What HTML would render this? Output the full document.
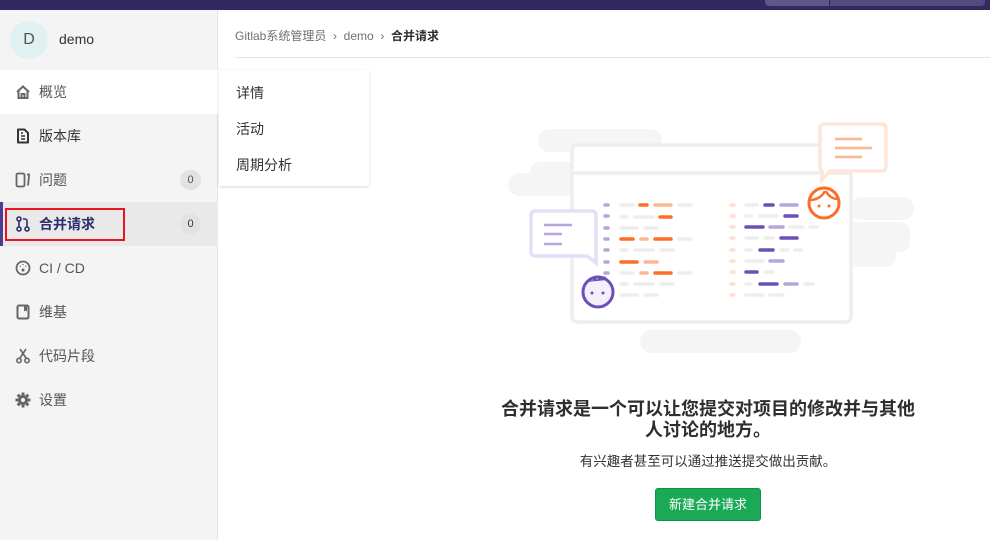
<!DOCTYPE html>
<html><head><meta charset="utf-8">
<style>
*{margin:0;padding:0;box-sizing:border-box}
body{width:990px;height:540px;overflow:hidden;background:#fff;font-family:"Liberation Sans","Noto Sans CJK SC",sans-serif;color:#2e2e2e;position:relative}
.top{position:absolute;left:0;top:0;width:990px;height:10px;background:#312a60}
.top .s1{position:absolute;left:765px;top:0;width:64px;height:6px;background:#5e5787;border-radius:0 0 0 4px}
.top .s2{position:absolute;left:830px;top:0;width:155px;height:6px;background:#534b80;border-radius:0 0 4px 0}
.side{position:absolute;left:0;top:10px;width:218px;height:530px;background:#f4f4f4;border-right:1px solid #e5e5e5}
.av{position:absolute;left:10px;top:11px;width:38px;height:38px;border-radius:50%;background:#e0f1f1;color:#555;font-size:16px;text-align:center;line-height:38px}
.pn{position:absolute;left:59px;top:21px;font-size:14px;color:#333}
.it{position:absolute;left:0;width:218px;height:44px;font-size:14px;color:#555;line-height:44px}
.it .t{position:absolute;left:39px}
.it svg{position:absolute;left:15px;top:14px}
.bd{position:absolute;left:180px;top:12px;width:21px;height:20px;border-radius:10px;background:#e2e2e2;font-size:11px;line-height:20px;text-align:center;color:#555}
.act{background:#e9e9e9;color:#2e2e6e;font-weight:bold}
.act:before{content:"";position:absolute;left:0;top:0;width:3px;height:44px;background:#4b3d8f}
.red{position:absolute;left:5px;top:208px;width:120px;height:33px;border:2px solid #e8141f}
.bc{position:absolute;left:235px;top:27px;font-size:12px;color:#707070}
.bc b{color:#2e2e2e}
.bl{position:absolute;left:235px;top:57px;width:755px;height:1px;background:#e5e5e5}
.fly{position:absolute;left:219px;top:70px;width:150px;height:116px;background:#fff;box-shadow:0 1px 3px rgba(0,0,0,.15);font-size:14px;color:#333}
.fly div{position:absolute;left:17px}
h2{position:absolute;left:490px;top:399px;width:436px;text-align:center;font-size:18px;line-height:21px;font-weight:bold;color:#2e2e2e}
.sub{position:absolute;left:470px;top:450px;width:476px;text-align:center;font-size:13.5px;color:#333}
.btn{position:absolute;left:655px;top:488px;width:106px;height:33px;background:#1aaa55;border:1px solid #168f48;border-radius:3px;color:#fff;font-size:13px;text-align:center;line-height:31px}
</style></head><body>
<div class="top"><div class="s1"></div><div class="s2"></div></div>
<div class="side">
<div class="av">D</div><div class="pn">demo</div>
<div class="it" style="top:60px;background:#fff"><svg width="16" height="16" viewBox="0 0 16 16"><path d="M2 8L8 2.5 14 8M3.5 7v7h9V7M6.5 14v-4h3v4" fill="none" stroke="#666" stroke-width="2"/></svg><span class="t">概览</span></div>
<div class="it" style="top:104px"><svg width="16" height="16" viewBox="0 0 16 16"><path d="M3 1.5h6.5L13 5v9.5H3z" fill="none" stroke="#333" stroke-width="2" stroke-linejoin="round"/><path d="M6 8h4M6 11h4M6 5h2" stroke="#333" stroke-width="1.4"/></svg><span class="t" style="color:#333">版本库</span></div>
<div class="it" style="top:148px"><svg width="16" height="16" viewBox="0 0 16 16"><rect x="1.5" y="1.5" width="8" height="13" rx="1.5" fill="none" stroke="#666" stroke-width="1.8"/><path d="M12 2.5h2v2l-1 9" fill="none" stroke="#666" stroke-width="1.8"/></svg><span class="t">问题</span><span class="bd">0</span></div>
<div class="it act" style="top:192px"><svg width="16" height="16" viewBox="0 0 16 16"><circle cx="4" cy="3" r="2" fill="none" stroke="#2e2e6e" stroke-width="1.6"/><circle cx="4" cy="13" r="2" fill="none" stroke="#2e2e6e" stroke-width="1.6"/><circle cx="12" cy="13" r="2" fill="none" stroke="#2e2e6e" stroke-width="1.6"/><path d="M4 5v6M12 11V5c0-1.5-1-2-2.5-2H8" fill="none" stroke="#2e2e6e" stroke-width="1.6"/></svg><span class="t">合并请求</span><span class="bd" style="font-weight:normal;color:#2e2e6e">0</span></div>
<div class="it" style="top:236px"><svg width="16" height="16" viewBox="0 0 16 16"><circle cx="8" cy="8" r="6.5" fill="none" stroke="#666" stroke-width="1.8"/><circle cx="8" cy="10" r="1.5" fill="#666"/><path d="M8 4v1M5 6l.7.7M11 6l-.7.7" stroke="#666" stroke-width="1.3"/></svg><span class="t">CI / CD</span></div>
<div class="it" style="top:280px"><svg width="16" height="16" viewBox="0 0 16 16"><rect x="2.5" y="1.5" width="11" height="13" rx="1.5" fill="none" stroke="#666" stroke-width="2"/><path d="M9 1.5v6l1.5-1 1.5 1v-6" fill="#666"/></svg><span class="t">维基</span></div>
<div class="it" style="top:324px"><svg width="16" height="16" viewBox="0 0 16 16"><path d="M5 1l6 9M11 1L5 10" stroke="#666" stroke-width="1.6"/><circle cx="4" cy="12.5" r="2.2" fill="none" stroke="#666" stroke-width="1.6"/><circle cx="12" cy="12.5" r="2.2" fill="none" stroke="#666" stroke-width="1.6"/></svg><span class="t">代码片段</span></div>
<div class="it" style="top:368px"><svg width="16" height="16" viewBox="0 0 16 16"><circle cx="8" cy="8" r="5" fill="#666"/><path d="M8 0.5v15M0.5 8h15M2.7 2.7l10.6 10.6M13.3 2.7L2.7 13.3" stroke="#666" stroke-width="3"/><circle cx="8" cy="8" r="2" fill="#f4f4f4"/></svg><span class="t">设置</span></div>
</div>
<div class="red"></div>
<div class="bc">Gitlab系统管理员 &nbsp;›&nbsp; demo &nbsp;›&nbsp; <b>合并请求</b></div>
<div class="bl"></div>
<div class="fly"><div style="top:13px">详情</div><div style="top:49px">活动</div><div style="top:85px">周期分析</div></div>
<svg style="position:absolute;left:500px;top:110px" width="420" height="250" viewBox="500 110 420 250">
<g fill="#f5f5f5">
<rect x="538" y="129" width="124" height="23" rx="11.5"/>
<rect x="508" y="173" width="70" height="23" rx="11.5"/>
<rect x="530" y="162" width="60" height="30" rx="10"/>
<rect x="850" y="197" width="64" height="23" rx="11.5"/>
<rect x="840" y="222" width="70" height="30" rx="10"/>
<rect x="840" y="245" width="56" height="22" rx="11"/>
<rect x="640" y="330" width="161" height="23" rx="11.5"/>
</g>
<rect x="572" y="145" width="279" height="177" rx="5" fill="#fff" stroke="#eee" stroke-width="3.5"/>
<line x1="572" y1="173" x2="851" y2="173" stroke="#eee" stroke-width="3.5"/>
<g stroke-linecap="round" stroke-width="3.5">
<g stroke="#b7a6dc"><line x1="605" y1="205" x2="608" y2="205"/><line x1="605" y1="216" x2="608" y2="216"/><line x1="605" y1="228" x2="608" y2="228"/><line x1="605" y1="239" x2="608" y2="239"/><line x1="605" y1="250" x2="608" y2="250"/><line x1="605" y1="262" x2="608" y2="262"/><line x1="605" y1="273" x2="608" y2="273"/></g>
<g stroke="#eee"><line x1="621" y1="205" x2="633" y2="205"/><line x1="679" y1="205" x2="691" y2="205"/><line x1="621" y1="217" x2="627" y2="217"/><line x1="635" y1="217" x2="653" y2="217"/><line x1="621" y1="228" x2="637" y2="228"/><line x1="645" y1="228" x2="657" y2="228"/><line x1="679" y1="239" x2="691" y2="239"/><line x1="621" y1="250" x2="627" y2="250"/><line x1="635" y1="250" x2="653" y2="250"/><line x1="661" y1="250" x2="673" y2="250"/><line x1="621" y1="273" x2="633" y2="273"/><line x1="679" y1="273" x2="691" y2="273"/><line x1="621" y1="284" x2="627" y2="284"/><line x1="635" y1="284" x2="653" y2="284"/><line x1="661" y1="284" x2="673" y2="284"/><line x1="621" y1="295" x2="637" y2="295"/><line x1="645" y1="295" x2="657" y2="295"/>
<line x1="746" y1="205" x2="757" y2="205"/><line x1="746" y1="216" x2="751" y2="216"/><line x1="760" y1="216" x2="777" y2="216"/><line x1="790" y1="227" x2="803" y2="227"/><line x1="810" y1="227" x2="817" y2="227"/><line x1="746" y1="238" x2="757" y2="238"/><line x1="765" y1="238" x2="773" y2="238"/><line x1="746" y1="250" x2="751" y2="250"/><line x1="781" y1="250" x2="788" y2="250"/><line x1="795" y1="250" x2="801" y2="250"/><line x1="746" y1="261" x2="763" y2="261"/><line x1="765" y1="272" x2="773" y2="272"/><line x1="746" y1="284" x2="751" y2="284"/><line x1="805" y1="284" x2="813" y2="284"/><line x1="746" y1="295" x2="763" y2="295"/><line x1="770" y1="295" x2="783" y2="295"/></g>
<g stroke="#fc6d26"><line x1="640" y1="205" x2="647" y2="205"/><line x1="660" y1="217" x2="671" y2="217"/><line x1="621" y1="239" x2="633" y2="239"/><line x1="655" y1="239" x2="671" y2="239"/><line x1="621" y1="262" x2="637" y2="262"/><line x1="655" y1="273" x2="671" y2="273"/></g>
<g stroke="#fdb692"><line x1="655" y1="205" x2="671" y2="205"/><line x1="641" y1="239" x2="647" y2="239"/><line x1="645" y1="262" x2="657" y2="262"/><line x1="641" y1="273" x2="647" y2="273"/></g>
<g stroke="#fde0d2"><line x1="731" y1="205" x2="734" y2="205"/><line x1="731" y1="216" x2="734" y2="216"/><line x1="731" y1="227" x2="734" y2="227"/><line x1="731" y1="238" x2="734" y2="238"/><line x1="731" y1="250" x2="734" y2="250"/><line x1="731" y1="261" x2="734" y2="261"/><line x1="731" y1="272" x2="734" y2="272"/><line x1="731" y1="284" x2="734" y2="284"/><line x1="731" y1="295" x2="734" y2="295"/></g>
<g stroke="#6b4fbb"><line x1="765" y1="205" x2="773" y2="205"/><line x1="785" y1="216" x2="797" y2="216"/><line x1="746" y1="227" x2="763" y2="227"/><line x1="781" y1="238" x2="797" y2="238"/><line x1="760" y1="250" x2="773" y2="250"/><line x1="746" y1="272" x2="757" y2="272"/><line x1="760" y1="284" x2="777" y2="284"/></g>
<g stroke="#b7a6dc"><line x1="781" y1="205" x2="797" y2="205"/><line x1="770" y1="227" x2="783" y2="227"/><line x1="770" y1="261" x2="783" y2="261"/><line x1="785" y1="284" x2="797" y2="284"/></g>
</g>
<path d="M824 124h58a4 4 0 0 1 4 4v39a4 4 0 0 1-4 4h-52l-8 9v-9a2 2 0 0 1-2-2v-41a4 4 0 0 1 4-4z" fill="#fff" stroke="#fde5d8" stroke-width="3.5"/>
<g stroke="#fdb692" stroke-width="2.5"><line x1="835" y1="139" x2="862" y2="139"/><line x1="835" y1="148" x2="872" y2="148"/><line x1="835" y1="157" x2="862" y2="157"/></g>
<circle cx="824" cy="203" r="15" fill="#fff" stroke="#fc6d26" stroke-width="3"/>
<path d="M810 200c6 0 12-3 15-9M826 191c2 5 7 8 12 8" fill="none" stroke="#fc6d26" stroke-width="2.5"/>
<circle cx="819" cy="206" r="1.5" fill="#fc6d26"/><circle cx="829" cy="206" r="1.5" fill="#fc6d26"/>
<path d="M535 211h57a4 4 0 0 1 4 4v48l-9-7h-52a4 4 0 0 1-4-4v-37a4 4 0 0 1 4-4z" fill="#fff" stroke="#e5dff5" stroke-width="3.5"/>
<g stroke="#b7a6dc" stroke-width="2.5"><line x1="544" y1="225" x2="572" y2="225"/><line x1="544" y1="234" x2="562" y2="234"/><line x1="544" y1="244" x2="562" y2="244"/></g>
<circle cx="598" cy="292" r="15" fill="#f3f0fb" stroke="#6b4fbb" stroke-width="3"/>
<path d="M587 282l3-4 2 3 3-4 2 3 3-4 2 3 3-3 2 4" fill="#6b4fbb"/>
<circle cx="592" cy="293" r="1.5" fill="#6b4fbb"/><circle cx="603" cy="293" r="1.5" fill="#6b4fbb"/>
</svg>
<h2>合并请求是一个可以让您提交对项目的修改并与其他<br>人讨论的地方。</h2>
<div class="sub">有兴趣者甚至可以通过推送提交做出贡献。</div>
<div class="btn">新建合并请求</div>
</body></html>
